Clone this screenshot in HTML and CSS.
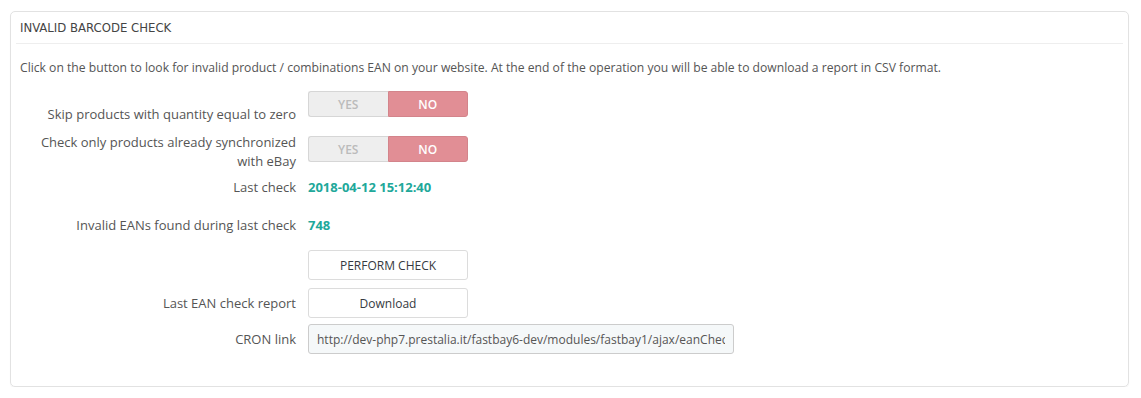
FILE: index.html
```html
<!DOCTYPE html>
<html lang="en">
<head>
    <meta charset="UTF-8">
    <title>Invalid barcode check</title>
    <link rel="stylesheet" href="styles.css">
</head>
<body>
    <div class="panel">
        <div class="panel-heading">Invalid barcode check</div>

        <p class="intro">Click on the button to look for invalid product / combinations EAN on your website. At the end of the operation you will be able to download a report in CSV format.</p>

        <div class="form-row row-skip">
            <label class="control-label">Skip products with quantity equal to zero</label>
            <div class="control">
                <span class="switch">
                    <span class="switch-yes">YES</span>
                    <span class="switch-no">NO</span>
                </span>
            </div>
        </div>

        <div class="form-row row-sync">
            <label class="control-label">Check only products already synchronized<br>with eBay</label>
            <div class="control">
                <span class="switch">
                    <span class="switch-yes">YES</span>
                    <span class="switch-no">NO</span>
                </span>
            </div>
        </div>

        <div class="form-row row-last">
            <label class="control-label">Last check</label>
            <div class="control"><span class="value">2018-04-12 15:12:40</span></div>
        </div>

        <div class="form-row row-count">
            <label class="control-label">Invalid EANs found during last check</label>
            <div class="control"><span class="value">748</span></div>
        </div>

        <div class="form-row row-perform">
            <label class="control-label"></label>
            <div class="control"><button class="btn">PERFORM CHECK</button></div>
        </div>

        <div class="form-row row-report">
            <label class="control-label">Last EAN check report</label>
            <div class="control"><button class="btn">Download</button></div>
        </div>

        <div class="form-row row-cron">
            <label class="control-label">CRON link</label>
            <div class="control">
                <input class="cron-input" type="text" readonly value="http://dev-php7.prestalia.it/fastbay6-dev/modules/fastbay1/ajax/eanCheck.php?token=5f3a9c">
            </div>
        </div>
    </div>
</body>
</html>
```

FILE: styles.css
```css
body {
    margin: 0;
    background-color: #ffffff;
    font-family: "Open Sans", "Liberation Sans", sans-serif;
    font-size: 12px;
    color: #555555;
}
.panel {
    margin: 11px 12px 0 10px;
    padding: 0 5px 32px 5px;
    border: 1px solid #e2e2e2;
    border-radius: 5px;
    box-shadow: 0 1px 1px rgba(0,0,0,0.05);
}
.panel-heading {
    height: 31px;
    line-height: 31px;
    padding-left: 4px;
    border-bottom: 1px solid #eeeeee;
    font-family: "Liberation Sans Narrow", "DejaVu Sans Condensed", sans-serif;
    font-size: 13px;
    text-transform: uppercase;
    color: #444444;
}
.intro {
    margin: 15px 0 0 4px;
    line-height: 18px;
    font-size: 12.15px;
}
.form-row {
    display: flex;
    align-items: flex-start;
}
.control-label {
    width: 280px;
    flex-shrink: 0;
    margin-right: 12px;
    text-align: right;
    font-size: 13px;
    line-height: 18px;
}
.row-skip { margin-top: 14px; }
.row-skip .control-label { padding-top: 14px; }
.row-sync { margin-top: 10px; }
.row-sync .control-label { line-height: 19px; }
.row-sync .control { padding-top: 3px; }
.row-last { margin-top: 7px; }
.row-count { margin-top: 20px; }
.row-perform { margin-top: 16px; }
.row-report { margin-top: 8px; }
.row-report .control-label,
.row-cron .control-label { line-height: 30px; }
.row-cron { margin-top: 6px; }

.switch {
    display: flex;
    width: 160px;
    height: 26px;
}
.switch span {
    flex: 1;
    display: flex;
    align-items: center;
    justify-content: center;
    font-weight: 600;
}
.switch-yes {
    background-color: #eeeeee;
    color: #bbbbbb;
    border: 1px solid #d6d6d6;
    border-right: none;
    border-radius: 3px 0 0 3px;
}
.switch-no {
    background-color: #e18e95;
    color: #ffffff;
    border: 1px solid #d3848b;
    border-radius: 0 3px 3px 0;
}
.value {
    display: block;
    line-height: 18px;
    font-size: 13px;
    font-weight: 700;
    color: #21a89a;
}
.btn {
    width: 160px;
    height: 30px;
    background-color: #ffffff;
    border: 1px solid #dcdcdc;
    border-radius: 3px;
    font-family: "Open Sans", "Liberation Sans", sans-serif;
    font-size: 12px;
    color: #363a41;
}
.cron-input {
    box-sizing: border-box;
    width: 426px;
    height: 30px;
    padding: 0 8px;
    background-color: #f5f8f9;
    border: 1px solid #cccccc;
    border-radius: 3px;
    font-family: "Open Sans", "Liberation Sans", sans-serif;
    font-size: 12px;
    color: #555555;
}
```
